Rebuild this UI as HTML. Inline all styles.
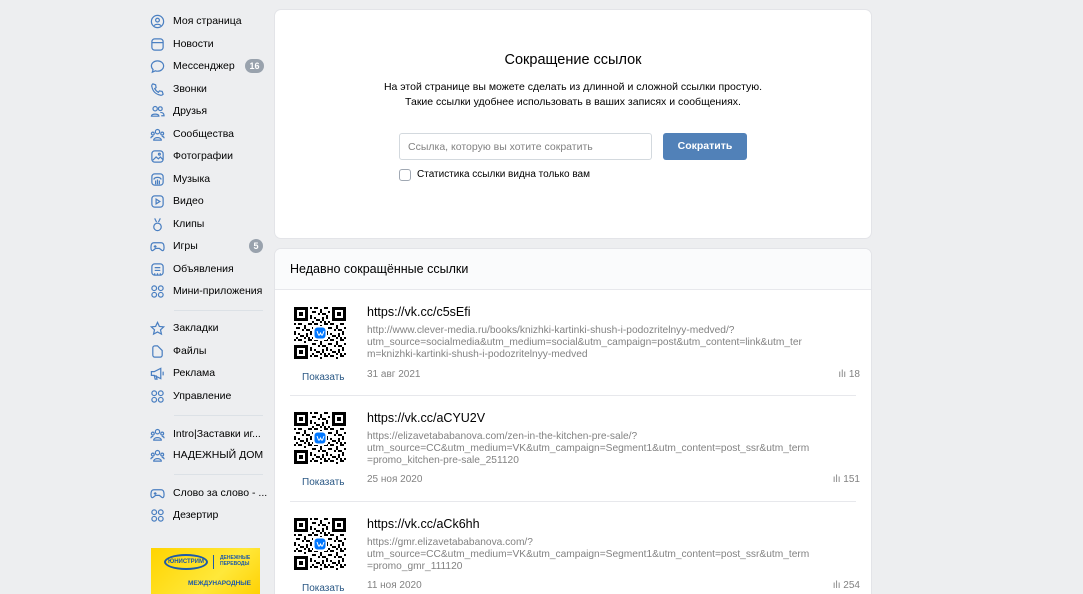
<!DOCTYPE html>
<html style="overflow:hidden;height:594px"><head><meta charset="utf-8">
<style>
*{margin:0;padding:0;box-sizing:border-box}
body{width:1083px;height:594px;overflow:hidden;background:#edeef0;font-family:"Liberation Sans","Noto Sans CJK SC",sans-serif;color:#000;position:relative}
.nav{position:absolute;left:150px;top:0;width:115px}
.it{position:absolute;left:0;height:20px;display:flex;align-items:center;font-size:10.5px;color:#000;white-space:nowrap}
.it svg{width:15px;height:15px;margin-right:8px;flex:none}
.badge{position:absolute;left:95px;height:14px;min-width:19px;border-radius:7px;background:#99a2ad;color:#fff;font-size:9px;font-weight:bold;text-align:center;line-height:14px;padding:0 4px}
.sep{position:absolute;left:24px;width:89px;height:1px;background:#dce1e6}
.card{position:absolute;left:275px;width:596px;background:#fff;border-radius:6px;box-shadow:0 0 0 1px #e3e4e8}
.qr{position:absolute;left:19px;width:52px;height:52px}
.show{position:absolute;left:27px;font-size:10px;color:#2a5885}
.url{position:absolute;left:92px;font-size:12.5px;color:#000}
.long{position:absolute;left:92px;font-size:10.2px;line-height:12px;color:#828282;width:470px;white-space:nowrap}
.date{position:absolute;left:92px;font-size:10px;color:#828282}
.cnt{position:absolute;right:11px;font-size:10px;color:#828282}
.rsep{position:absolute;left:15px;width:566px;height:1px;background:#e7e8ec}
</style></head><body>
<svg width="0" height="0" style="position:absolute">
<defs>
<pattern id="m" width="16" height="16" patternUnits="userSpaceOnUse">
<rect x="0" y="0" width="2" height="2"/><rect x="4" y="0" width="4" height="2"/><rect x="10" y="2" width="2" height="4"/><rect x="14" y="0" width="2" height="2"/><rect x="2" y="4" width="4" height="2"/><rect x="8" y="6" width="2" height="2"/><rect x="12" y="6" width="4" height="2"/><rect x="0" y="8" width="2" height="4"/><rect x="4" y="10" width="2" height="2"/><rect x="6" y="12" width="4" height="2"/><rect x="12" y="10" width="2" height="4"/><rect x="2" y="14" width="2" height="2"/><rect x="14" y="14" width="2" height="2"/><rect x="10" y="14" width="2" height="2"/>
</pattern>
<symbol id="q" viewBox="0 0 52 52">
<rect x="0" y="0" width="52" height="52" fill="url(#m)"/>
<rect x="0" y="0" width="16" height="16" fill="#fff"/><rect x="36" y="0" width="16" height="16" fill="#fff"/><rect x="0" y="36" width="16" height="16" fill="#fff"/>
<rect x="1.5" y="1.5" width="11" height="11" fill="none" stroke="#000" stroke-width="3"/><rect x="5" y="5" width="4" height="4"/>
<rect x="39.5" y="1.5" width="11" height="11" fill="none" stroke="#000" stroke-width="3"/><rect x="43" y="5" width="4" height="4"/>
<rect x="1.5" y="39.5" width="11" height="11" fill="none" stroke="#000" stroke-width="3"/><rect x="5" y="43" width="4" height="4"/>
<rect x="19" y="19" width="14" height="14" fill="#fff"/>
<rect x="20.5" y="20.5" width="11" height="11" rx="3" fill="#0077ff"/>
<path d="M23 24l1.5 4h1l1-2 1 2h1l1.5-4" stroke="#fff" stroke-width="1" fill="none"/>
</symbol>
</defs></svg>

<div class="nav">
<div class="it" style="top:11px"><svg viewBox="0 0 16 16" fill="none" stroke="#4a7fc1" stroke-width="1.3"><circle cx="8" cy="8" r="6.5"/><circle cx="8" cy="6.5" r="2"/><path d="M4.5 12.5c1-2 6-2 7 0"/></svg>Моя страница</div>
<div class="it" style="top:34px"><svg viewBox="0 0 16 16" fill="none" stroke="#4a7fc1" stroke-width="1.3"><rect x="2" y="2" width="12" height="12" rx="3"/><path d="M2 6h12"/></svg>Новости</div>
<div class="it" style="top:56px"><svg viewBox="0 0 16 16" fill="none" stroke="#4a7fc1" stroke-width="1.3"><path d="M8 2c3.5 0 6.5 2.3 6.5 5.5S11.5 13 8 13c-.8 0-1.6-.1-2.3-.4L2.5 14l.8-2.7C2.2 10.3 1.5 9 1.5 7.5 1.5 4.3 4.5 2 8 2z"/></svg>Мессенджер</div>
<div class="badge" style="top:59px">16</div>
<div class="it" style="top:79px"><svg viewBox="0 0 16 16" fill="none" stroke="#4a7fc1" stroke-width="1.3"><path d="M3 2l3 1 .5 3-1.5 1c1 2 2 3 4 4l1-1.5 3 .5 1 3c-1 1-2 1.5-3 1C6 13 3 10 2 5c-.5-1 0-2 1-3z"/></svg>Звонки</div>
<div class="it" style="top:101px"><svg viewBox="0 0 16 16" fill="none" stroke="#4a7fc1" stroke-width="1.3"><circle cx="5.5" cy="5" r="2.3"/><circle cx="11" cy="5" r="2"/><path d="M1.5 13c0-3 8-3 8 0zM11 9c2.5 0 4 1 4 3.5h-3"/></svg>Друзья</div>
<div class="it" style="top:124px"><svg viewBox="0 0 16 16" fill="none" stroke="#4a7fc1" stroke-width="1.3"><circle cx="8" cy="5" r="2.3"/><circle cx="3" cy="7" r="1.5"/><circle cx="13" cy="7" r="1.5"/><path d="M4 14c0-3.5 8-3.5 8 0zM1 12c0-1.5 1-2 2.5-2M15 12c0-1.5-1-2-2.5-2"/></svg>Сообщества</div>
<div class="it" style="top:146px"><svg viewBox="0 0 16 16" fill="none" stroke="#4a7fc1" stroke-width="1.3"><rect x="2" y="2" width="12" height="12" rx="3"/><path d="M3 12l3.5-3.5 2.5 2 2-2 3 3"/><circle cx="10" cy="5.5" r="1"/></svg>Фотографии</div>
<div class="it" style="top:169px"><svg viewBox="0 0 16 16" fill="none" stroke="#4a7fc1" stroke-width="1.3"><rect x="2" y="2" width="12" height="12" rx="3"/><path d="M4 8c1-3 7-3 8 0M6 9v4M8 8v5M10 9v4"/></svg>Музыка</div>
<div class="it" style="top:191px"><svg viewBox="0 0 16 16" fill="none" stroke="#4a7fc1" stroke-width="1.3"><rect x="2" y="2" width="12" height="12" rx="3"/><path d="M6.5 5.5v5l4-2.5z"/></svg>Видео</div>
<div class="it" style="top:214px"><svg viewBox="0 0 16 16" fill="none" stroke="#4a7fc1" stroke-width="1.3"><path d="M5 1.5l2 4M11 1.5l-2 4"/><circle cx="8" cy="10.5" r="4"/></svg>Клипы</div>
<div class="it" style="top:236px"><svg viewBox="0 0 16 16" fill="none" stroke="#4a7fc1" stroke-width="1.3"><path d="M4 4h8c2 0 3 2 3 5s-1 4-2.5 3L10 10H6l-2.5 2C2 13 1 12 1 9s1-5 3-5z"/><path d="M4 8h3M5.5 6.5v3"/></svg>Игры</div>
<div class="badge" style="top:239px;left:99px;min-width:14px">5</div>
<div class="it" style="top:259px"><svg viewBox="0 0 16 16" fill="none" stroke="#4a7fc1" stroke-width="1.3"><rect x="2" y="2" width="12" height="12" rx="3"/><path d="M5 6h6M5 9h6M5 12v2M8 12v2M11 12v2"/></svg>Объявления</div>
<div class="it" style="top:281px"><svg viewBox="0 0 16 16" fill="none" stroke="#4a7fc1" stroke-width="1.3"><circle cx="4.5" cy="4.5" r="2.5"/><circle cx="11.5" cy="4.5" r="2.5"/><circle cx="4.5" cy="11.5" r="2.5"/><circle cx="11.5" cy="11.5" r="2.5"/></svg>Мини-приложения</div>
<div class="sep" style="top:310px"></div>
<div class="it" style="top:318px"><svg viewBox="0 0 16 16" fill="none" stroke="#4a7fc1" stroke-width="1.3"><path d="M8 1.5l2 4.3 4.6.5-3.4 3.1 1 4.6L8 11.7 3.8 14l1-4.6L1.4 6.3 6 5.8z"/></svg>Закладки</div>
<div class="it" style="top:341px"><svg viewBox="0 0 16 16" fill="none" stroke="#4a7fc1" stroke-width="1.3"><path d="M3 4c0-1 1-2 2-2h3l5 5v5c0 1-1 2-2 2H5c-1 0-2-1-2-2z"/></svg>Файлы</div>
<div class="it" style="top:363px"><svg viewBox="0 0 16 16" fill="none" stroke="#4a7fc1" stroke-width="1.3"><path d="M1.5 6h3l7-3.5v11L4.5 10h-3zM4.5 10l1 4h2l-1-4M14 6v4"/></svg>Реклама</div>
<div class="it" style="top:386px"><svg viewBox="0 0 16 16" fill="none" stroke="#4a7fc1" stroke-width="1.3"><circle cx="4.5" cy="4.5" r="2.5"/><circle cx="11.5" cy="4.5" r="2.5"/><circle cx="4.5" cy="11.5" r="2.5"/><circle cx="11.5" cy="11.5" r="2.5"/></svg>Управление</div>
<div class="sep" style="top:415px"></div>
<div class="it" style="top:424px"><svg viewBox="0 0 16 16" fill="none" stroke="#4a7fc1" stroke-width="1.3"><circle cx="8" cy="5" r="2.3"/><circle cx="3" cy="7" r="1.5"/><circle cx="13" cy="7" r="1.5"/><path d="M4 14c0-3.5 8-3.5 8 0zM1 12c0-1.5 1-2 2.5-2M15 12c0-1.5-1-2-2.5-2"/></svg>Intro|Заставки иг...</div>
<div class="it" style="top:445px"><svg viewBox="0 0 16 16" fill="none" stroke="#4a7fc1" stroke-width="1.3"><circle cx="8" cy="5" r="2.3"/><circle cx="3" cy="7" r="1.5"/><circle cx="13" cy="7" r="1.5"/><path d="M4 14c0-3.5 8-3.5 8 0zM1 12c0-1.5 1-2 2.5-2M15 12c0-1.5-1-2-2.5-2"/></svg>НАДЕЖНЫЙ ДОМ</div>
<div class="sep" style="top:474px"></div>
<div class="it" style="top:483px"><svg viewBox="0 0 16 16" fill="none" stroke="#4a7fc1" stroke-width="1.3"><path d="M4 4h8c2 0 3 2 3 5s-1 4-2.5 3L10 10H6l-2.5 2C2 13 1 12 1 9s1-5 3-5z"/><path d="M4 8h3M5.5 6.5v3"/></svg>Слово за слово - ...</div>
<div class="it" style="top:505px"><svg viewBox="0 0 16 16" fill="none" stroke="#4a7fc1" stroke-width="1.3"><circle cx="4.5" cy="4.5" r="2.5"/><circle cx="11.5" cy="4.5" r="2.5"/><circle cx="4.5" cy="11.5" r="2.5"/><circle cx="11.5" cy="11.5" r="2.5"/></svg>Дезертир</div>
<div style="position:absolute;left:1px;top:548px;width:109px;height:50px;background:linear-gradient(135deg,#ffd400,#ffe83a 60%,#ffd000);overflow:hidden">
<div style="position:absolute;left:13px;top:6px;width:44px;height:16px;border:2px solid #1d5aa8;border-radius:50%;font-size:6px;font-weight:bold;color:#1d5aa8;text-align:center;line-height:12px">ЮНИСТРИМ</div>
<div style="position:absolute;left:62px;top:7px;width:1px;height:14px;background:#1d5aa8"></div>
<div style="position:absolute;left:69px;top:7px;font-size:5px;font-weight:bold;color:#1d5aa8;line-height:6px">ДЕНЕЖНЫЕ<br>ПЕРЕВОДЫ</div>
<div style="position:absolute;left:37px;top:32px;font-size:6.5px;font-weight:bold;color:#1d5aa8">МЕЖДУНАРОДНЫЕ</div>
</div>
</div>

<div class="card" style="top:10px;height:228px">
<div style="position:absolute;left:0;right:0;top:42px;text-align:center;font-size:14.5px">Сокращение ссылок</div>
<div style="position:absolute;left:0;right:0;top:70px;text-align:center;font-size:10.5px;line-height:15px">На этой странице вы можете сделать из длинной и сложной ссылки простую.<br>Такие ссылки удобнее использовать в ваших записях и сообщениях.</div>
<div style="position:absolute;left:124px;top:123px;width:253px;height:27px;border:1px solid #d3d9de;border-radius:3px;font-size:10.5px;color:#828282;padding:7px 0 0 8px">Ссылка, которую вы хотите сократить</div>
<div style="position:absolute;left:388px;top:123px;width:84px;height:27px;background:#5181b8;border-radius:3px;color:#fff;font-size:10.5px;font-weight:bold;text-align:center;line-height:27px">Сократить</div>
<div style="position:absolute;left:124px;top:159px;width:12px;height:12px;border:1px solid #a0a8b3;border-radius:3px"></div>
<div style="position:absolute;left:142px;top:159px;font-size:10px">Статистика ссылки видна только вам</div>
</div>

<div class="card" style="top:249px;height:360px">
<div style="position:absolute;left:0;right:0;top:0;height:41px;border-bottom:1px solid #e7e8ec;background:#fafbfc;border-radius:6px 6px 0 0"></div>
<div style="position:absolute;left:15px;top:13px;font-size:12.5px">Недавно сокращённые ссылки</div>

<svg class="qr" style="top:58px"><use href="#q"/></svg>
<div class="show" style="top:123px">Показать</div>
<div class="url" style="top:56px">https://vk.cc/c5sEfi</div>
<div class="long" style="top:76px">http://www.clever-media.ru/books/knizhki-kartinki-shush-i-podozritelnyy-medved/?<br>utm_source=socialmedia&amp;utm_medium=social&amp;utm_campaign=post&amp;utm_content=link&amp;utm_ter<br>m=knizhki-kartinki-shush-i-podozritelnyy-medved</div>
<div class="date" style="top:120px">31 авг 2021</div>
<div class="cnt" style="top:120px">ılı 18</div>
<div class="rsep" style="top:146px"></div>

<svg class="qr" style="top:163px"><use href="#q"/></svg>
<div class="show" style="top:228px">Показать</div>
<div class="url" style="top:162px">https://vk.cc/aCYU2V</div>
<div class="long" style="top:182px">https://elizavetababanova.com/zen-in-the-kitchen-pre-sale/?<br>utm_source=CC&amp;utm_medium=VK&amp;utm_campaign=Segment1&amp;utm_content=post_ssr&amp;utm_term<br>=promo_kitchen-pre-sale_251120</div>
<div class="date" style="top:225px">25 ноя 2020</div>
<div class="cnt" style="top:225px">ılı 151</div>
<div class="rsep" style="top:252px"></div>

<svg class="qr" style="top:269px"><use href="#q"/></svg>
<div class="show" style="top:334px">Показать</div>
<div class="url" style="top:268px">https://vk.cc/aCk6hh</div>
<div class="long" style="top:288px">https://gmr.elizavetababanova.com/?<br>utm_source=CC&amp;utm_medium=VK&amp;utm_campaign=Segment1&amp;utm_content=post_ssr&amp;utm_term<br>=promo_gmr_111120</div>
<div class="date" style="top:331px">11 ноя 2020</div>
<div class="cnt" style="top:331px">ılı 254</div>
</div>
</body></html>
